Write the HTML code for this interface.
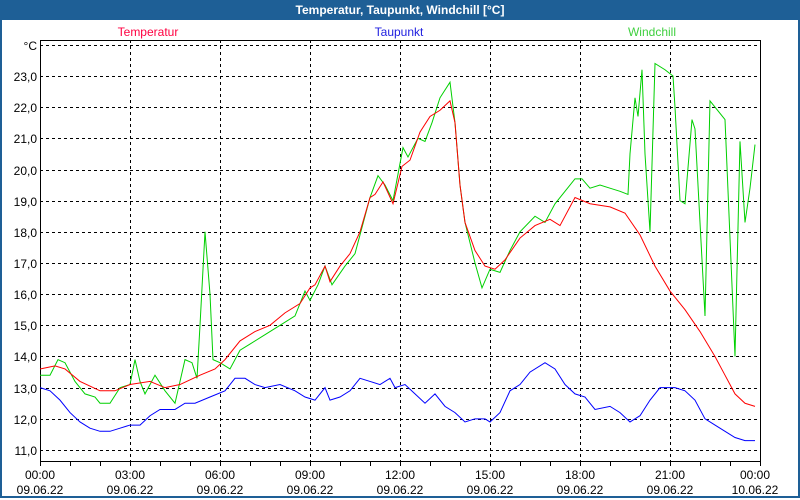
<!DOCTYPE html>
<html><head><meta charset="utf-8"><style>
body{margin:0;width:800px;height:500px;overflow:hidden;background:#fff;font-family:"Liberation Sans","DejaVu Sans",sans-serif}
.frame{position:absolute;left:0;top:0;width:796px;height:496px;border:2px solid #1e5f96;border-top:none}
.title{position:absolute;left:0;top:0;width:800px;height:20px;background:#1e5f96;color:#fff;font-weight:bold;font-size:12px;text-align:center;line-height:20px}
</style></head><body>
<div class="frame"></div>
<div class="title">Temperatur, Taupunkt, Windchill [°C]</div>
<svg width="800" height="500" style="position:absolute;left:0;top:0" font-size="12" font-family="Liberation Sans, DejaVu Sans, sans-serif">
<g text-anchor="middle">
<text x="148" y="36" fill="#ff0040">Temperatur</text>
<text x="399" y="36" fill="#2020e0">Taupunkt</text>
<text x="652" y="36" fill="#40d040">Windchill</text>
</g>
<g stroke="#000" stroke-dasharray="3,3" stroke-width="1" shape-rendering="crispEdges">
<path d="M40 45.5H760M40 76.5H760M40 107.5H760M40 138.5H760M40 170.5H760M40 201.5H760M40 232.5H760M40 263.5H760M40 294.5H760M40 325.5H760M40 356.5H760M40 388.5H760M40 419.5H760M40 450.5H760"/>
<path d="M130.5 40V461M220.5 40V461M310.5 40V461M400.5 40V461M490.5 40V461M580.5 40V461M670.5 40V461"/>
</g>
<g stroke="#000" fill="none" shape-rendering="crispEdges">
<rect x="40.5" y="40.5" width="720" height="421"/>
<path d="M40.5 461V466M70.5 461V466M100.5 461V466M130.5 461V466M160.5 461V466M190.5 461V466M220.5 461V466M250.5 461V466M280.5 461V466M310.5 461V466M340.5 461V466M370.5 461V466M400.5 461V466M430.5 461V466M460.5 461V466M490.5 461V466M520.5 461V466M550.5 461V466M580.5 461V466M610.5 461V466M640.5 461V466M670.5 461V466M700.5 461V466M730.5 461V466M760.5 461V466"/>
</g>
<g text-anchor="end" fill="#000">
<text x="37" y="50">°C</text>
<text x="37" y="81">23,0</text><text x="37" y="112">22,0</text><text x="37" y="143">21,0</text><text x="37" y="175">20,0</text><text x="37" y="206">19,0</text><text x="37" y="237">18,0</text><text x="37" y="268">17,0</text><text x="37" y="299">16,0</text><text x="37" y="330">15,0</text><text x="37" y="361">14,0</text><text x="37" y="393">13,0</text><text x="37" y="424">12,0</text><text x="37" y="455">11,0</text>
</g>
<g text-anchor="middle" fill="#000">
<text x="40" y="479">00:00</text><text x="40" y="494">09.06.22</text>
<text x="130" y="479">03:00</text><text x="130" y="494">09.06.22</text>
<text x="220" y="479">06:00</text><text x="220" y="494">09.06.22</text>
<text x="310" y="479">09:00</text><text x="310" y="494">09.06.22</text>
<text x="400" y="479">12:00</text><text x="400" y="494">09.06.22</text>
<text x="490" y="479">15:00</text><text x="490" y="494">09.06.22</text>
<text x="580" y="479">18:00</text><text x="580" y="494">09.06.22</text>
<text x="670" y="479">21:00</text><text x="670" y="494">09.06.22</text>
<text x="755" y="479">00:00</text><text x="755" y="494">10.06.22</text>
</g>
<g transform="translate(0,450) scale(1,-31.17) translate(0,-11)" fill="none" stroke-width="1">
<polyline vector-effect="non-scaling-stroke" stroke="#0000ff" points="40,13 50,12.9 60,12.6 70,12.2 80,11.9 90,11.7 100,11.6 110,11.6 120,11.7 130,11.8 140,11.8 150,12.1 160,12.3 175,12.3 185,12.5 195,12.5 210,12.7 225,12.9 235,13.3 245,13.3 255,13.1 265,13 280,13.1 295,12.9 305,12.7 315,12.6 325,13 330,12.6 340,12.7 350,12.9 360,13.3 370,13.2 380,13.1 390,13.3 395,13 405,13.1 415,12.8 425,12.5 435,12.8 445,12.4 455,12.2 465,11.9 475,12 485,12 490,11.9 500,12.2 510,12.9 520,13.1 530,13.5 545,13.8 555,13.6 565,13.1 575,12.8 585,12.7 595,12.3 610,12.4 620,12.2 630,11.9 640,12.1 650,12.6 660,13 675,13 685,12.9 695,12.6 705,12 715,11.8 725,11.6 735,11.4 745,11.3 755,11.3"/>
<polyline vector-effect="non-scaling-stroke" stroke="#00d000" points="40,13.4 50,13.4 58,13.9 65,13.8 75,13.2 85,12.8 95,12.7 100,12.5 110,12.5 120,13 130,13.1 135,13.9 140,13.2 145,12.8 155,13.4 165,12.9 175,12.5 185,13.9 192,13.8 197,13.3 200,15 205,18 210,16 213,13.9 220,13.8 230,13.6 240,14.2 250,14.4 265,14.7 280,15 295,15.3 305,16.1 310,15.8 318,16.3 325,16.9 332,16.3 345,16.9 355,17.3 370,19.1 378,19.8 385,19.5 393,19 403,20.7 408,20.4 418,21 425,20.9 432,21.5 440,22.3 450,22.8 455,21.5 460,19.5 465,18.3 475,17 482,16.2 490,16.8 500,16.7 510,17.4 520,18 535,18.5 545,18.3 555,18.9 565,19.3 575,19.7 582,19.7 590,19.4 600,19.5 610,19.4 620,19.3 628,19.2 630,20.5 635,22.3 638,21.7 642,23.2 645,20.5 650,18 655,23.4 665,23.2 673,23 675,22 680,19 685,18.9 692,21.6 695,21.3 705,15.3 710,22.2 725,21.6 735,14 740,20.9 745,18.3 750,19.4 755,20.8"/>
<polyline vector-effect="non-scaling-stroke" stroke="#ff0000" points="40,13.6 55,13.7 65,13.6 80,13.2 100,12.9 115,12.9 130,13.1 150,13.2 165,13 180,13.1 200,13.4 215,13.6 225,13.9 240,14.5 255,14.8 270,15 285,15.4 300,15.7 310,16.2 315,16.3 325,16.9 330,16.4 340,16.9 350,17.3 360,18 370,19.1 375,19.2 383,19.6 393,18.9 402,20.1 410,20.3 420,21.2 430,21.7 440,21.9 450,22.2 455,21.5 460,19.5 465,18.3 475,17.4 485,16.9 495,16.8 505,17.1 520,17.8 535,18.2 550,18.4 560,18.2 575,19.1 590,18.9 610,18.8 625,18.6 640,17.9 655,16.9 670,16.1 685,15.5 700,14.8 715,14 725,13.4 735,12.8 745,12.5 755,12.4"/>
</g>
</svg>
</body></html>
